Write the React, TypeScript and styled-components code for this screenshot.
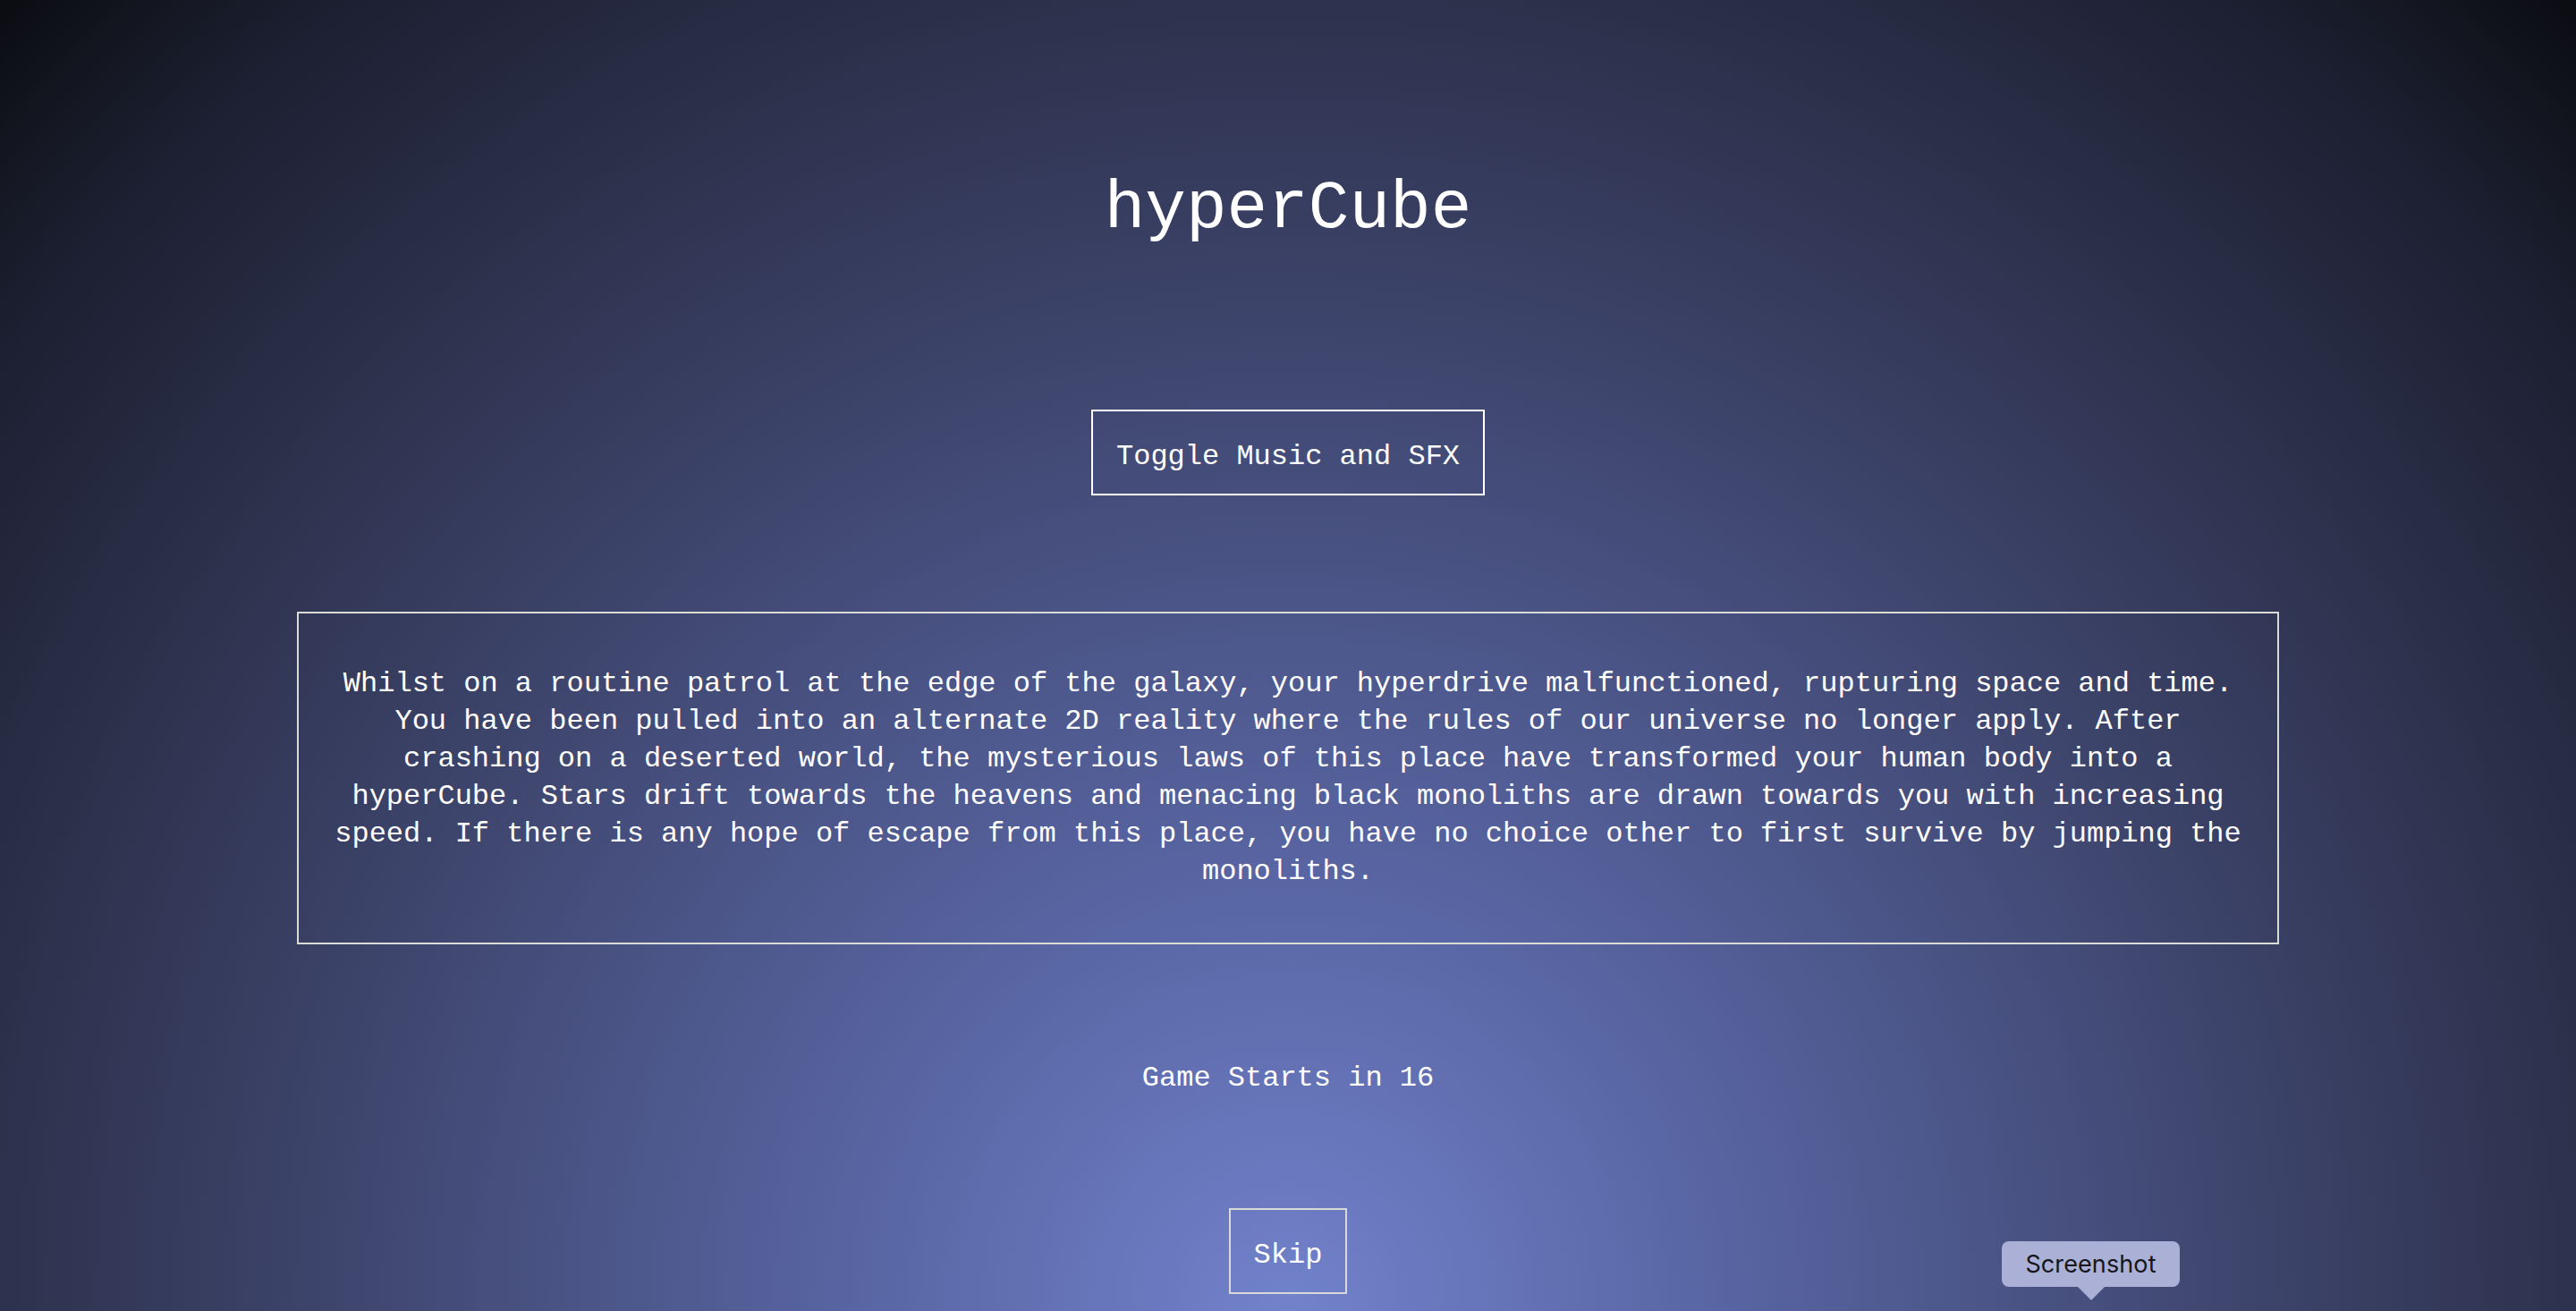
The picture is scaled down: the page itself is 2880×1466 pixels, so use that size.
import React from "react";
import styled, { createGlobalStyle } from "styled-components";

const GlobalStyle = createGlobalStyle`
  html, body {
    margin: 0;
    padding: 0;
    height: 100%;
  }
  body {
    background: #0c0d12;
    font-family: "Liberation Mono", "DejaVu Sans Mono", monospace;
    color: #ffffff;
  }
  * { box-sizing: border-box; }
`;

const Page = styled.main`
  position: relative;
  width: 100%;
  height: 100vh;
  min-height: 1466px;
  overflow: hidden;
  display: flex;
  flex-direction: column;
  align-items: center;
  padding-top: 196px;
  background: radial-gradient(
    ellipse farthest-corner at 50% 100%,
    #7282cb 0%,
    #5a67a6 22%,
    #373d5f 60%,
    #1c1f30 88%,
    #0b0c11 100%
  );
`;

const Title = styled.h1`
  margin: 0;
  font-family: "Liberation Mono", "DejaVu Sans Mono", monospace;
  font-weight: 400;
  font-size: 76px;
  line-height: 76px;
  color: #ffffff;
  letter-spacing: 0;
`;

const OutlineButton = styled.button<{ $muted?: boolean; $gap: number }>`
  margin-top: ${(p) => p.$gap}px;
  background: transparent;
  color: #ffffff;
  font-family: "Liberation Mono", "DejaVu Sans Mono", monospace;
  font-size: 32px;
  line-height: 42px;
  padding: 30px 26px 20px;
  border: 2px solid ${(p) => (p.$muted ? "#d9d9d9" : "#ffffff")};
  border-radius: 0;
  cursor: pointer;
  white-space: nowrap;
`;

const StoryBox = styled.section`
  margin-top: 130px;
  width: 2216px;
  border: 2px solid #dcdcd6;
  padding: 58px 32px 58px;
  font-size: 32px;
  line-height: 42px;
  text-align: center;
  color: #ffffff;
`;

const StoryText = styled.p`
  margin: 0;
  font-family: "Liberation Mono", "DejaVu Sans Mono", monospace;
`;

const Countdown = styled.p`
  margin: 129px 0 0;
  font-size: 32px;
  line-height: 42px;
  color: #ffffff;
`;

const Tooltip = styled.div`
  position: absolute;
  left: 2238px;
  top: 1388px;
  width: 199px;
  height: 51px;
  border-radius: 8px;
  background: #aab0d6;
  color: #15161c;
  font-family: Inter, "Noto Sans", sans-serif;
  font-size: 27px;
  display: flex;
  align-items: center;
  justify-content: center;
  letter-spacing: 0.1px;

  &::after {
    content: "";
    position: absolute;
    left: 50%;
    bottom: -15px;
    transform: translateX(-50%);
    border-left: 15px solid transparent;
    border-right: 15px solid transparent;
    border-top: 15px solid #aab0d6;
  }
`;

const story =
  "Whilst on a routine patrol at the edge of the galaxy, your hyperdrive malfunctioned, rupturing space and time. You have been pulled into an alternate 2D reality where the rules of our universe no longer apply. After crashing on a deserted world, the mysterious laws of this place have transformed your human body into a hyperCube. Stars drift towards the heavens and menacing black monoliths are drawn towards you with increasing speed. If there is any hope of escape from this place, you have no choice other to first survive by jumping the monoliths.";

export default function App() {
  return (
    <>
      <GlobalStyle />
      <Page>
        <Title>hyperCube</Title>
        <OutlineButton $gap={186}>Toggle Music and SFX</OutlineButton>
        <StoryBox>
          <StoryText>{story}</StoryText>
        </StoryBox>
        <Countdown>Game Starts in 16</Countdown>
        <OutlineButton $gap={124} $muted>
          Skip
        </OutlineButton>
        <Tooltip>Screenshot</Tooltip>
      </Page>
    </>
  );
}
